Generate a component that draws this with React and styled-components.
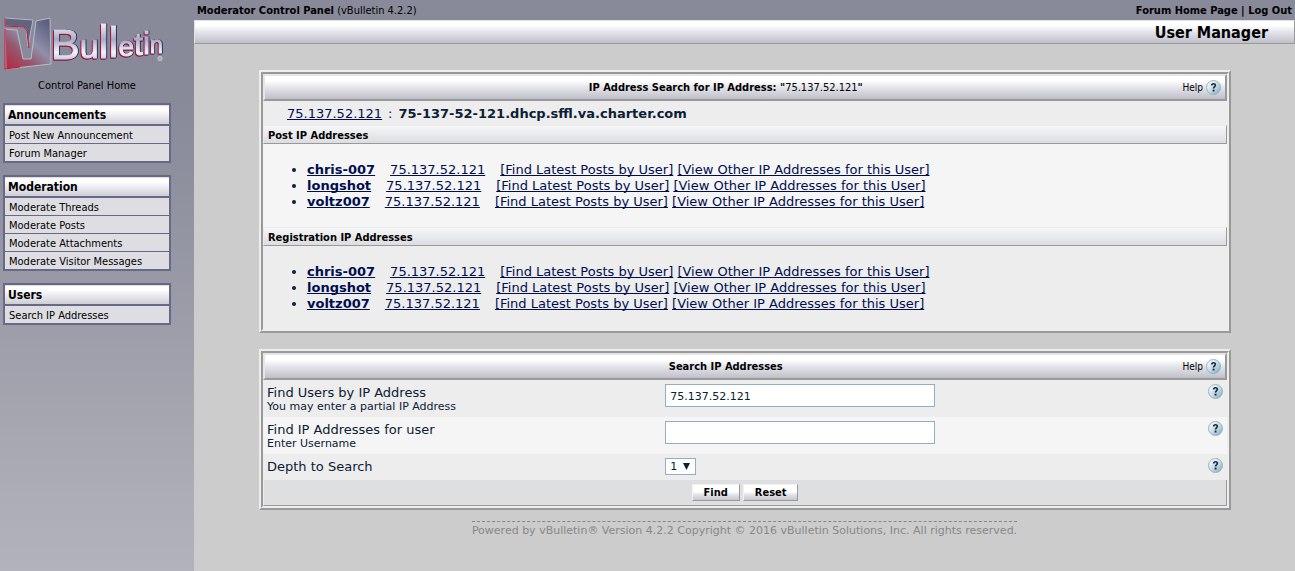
import React from 'react';
import styled, { createGlobalStyle, css } from 'styled-components';

const tahoma = `'Tahoma', 'DejaVu Sans Condensed', 'DejaVu Sans', sans-serif`;
const verdana = `'Verdana', 'DejaVu Sans', sans-serif`;
const metal = 'linear-gradient(#ffffff 20%, #e2e3e9 52%, #c8c8d1 88%, #bebecb)';

const GlobalStyle = createGlobalStyle`
  *, *::before, *::after { box-sizing: border-box; }
  body { margin: 0; background: #cccccc; }
  a { color: inherit; text-decoration-skip-ink: none; }
`;

const Page = styled.div`
  display: grid;
  grid-template-columns: 194px minmax(0, 1fr);
  min-height: 100vh;
  color: #0b2034;
  font: 13px/16px ${verdana};
`;

const Sidebar = styled.nav`
  display: flex;
  flex-direction: column;
  padding: 0 23px 16px 3px;
  background: linear-gradient(#888999 100px, #b5b6bc 600px);
  color: #000;
  font: 11px/14px ${tahoma};
`;

const Logo = styled.svg`
  display: block;
  width: 168px;
  height: 74px;
`;

const Wordmark = styled.text`
  font-family: 'Liberation Sans', sans-serif;
  fill: url(#chrome);
  stroke: url(#chrome);
  filter: drop-shadow(-1px 1px 0 #a5122f) drop-shadow(1px 0 0 #30335f);
`;

const HomeLink = styled.a`
  align-self: center;
  margin: 5px 0 10px;
  text-decoration: none;
`;

const NavGroup = styled.section`
  display: grid;
  gap: 1px;
  margin-bottom: 12px;
  padding: 2px;
  background: #686889;
`;

const NavTitle = styled.h2`
  margin: 0 0 1px;
  padding: 2px 3px 1px;
  border-top: 1px solid #dddde2;
  background: linear-gradient(#ffffff 20%, #e6e6eb 60%, #cdcdd6);
  font: bold 12px/15px ${tahoma};
`;

const NavLink = styled.a`
  padding: 3px 4px 0;
  background: #dddde2;
  text-decoration: none;
`;

const TopBar = styled.header`
  display: flex;
  justify-content: space-between;
  padding: 4px 3px 2px;
  background: #888999;
  color: #000;
  font: 11px/14px ${tahoma};
`;

const TopLinks = styled.div`
  font-weight: bold;
  a { text-decoration: none; }
`;

const TitleBar = styled.h1`
  margin: 0 0 26px;
  padding: 3px 26px 1px;
  border: 1px solid;
  border-color: #e2e2e2 #999 #999 #e2e2e2;
  background: ${metal};
  color: #000;
  font: bold 16px/18px ${tahoma};
  text-align: right;
`;

const Outer = styled.section`
  margin: 0 64px 16px 65px;
  border: 2px solid;
  border-color: #eeeeee #999 #999 #eeeeee;
`;

const Inner = styled.div`
  border: 2px solid;
  border-color: #999 #eeeeee #eeeeee #999;
  background: #ededed;
`;

const PanelHead = styled.div`
  display: flex;
  align-items: center;
  height: 27px;
  padding: 0 4px;
  border: 2px solid;
  border-color: #e6e6e6 #999 #999 #e6e6e6;
  background: ${metal};
  color: #000;
  font: 10px/14px ${tahoma};
`;

const PanelTitle = styled.h2`
  flex: 1;
  margin: 0;
  font: bold 11px/14px ${tahoma};
  text-align: center;
  span { font-weight: normal; }
`;

const HelpLink = styled.a`
  display: flex;
  align-items: center;
  gap: 3px;
  text-decoration: none;
`;

const HelpGlyph = styled.svg`
  display: block;
  flex: none;
  width: 15px;
  height: 15px;
`;

const HostLine = styled.div`
  display: flex;
  gap: 6px;
  padding: 5px 24px 3px;
  a { color: #000e50; }
`;

const Band = styled.h3`
  margin: 0;
  padding: 3px 4px 0;
  border: 1px solid;
  border-color: #ececee #999 #999 #ececee;
  background: linear-gradient(#f5f6f8, #dcdde0);
  color: #000;
  font: bold 11px/14px ${tahoma};
`;

const UserList = styled.ul`
  margin: 0;
  padding: 18px 4px 17px 44px;
  background: ${(p) => (p.$light ? '#f5f5f5' : '#ededed')};
  a { color: #000e50; }
`;

const Ip = styled.a`
  margin: 0 15px;
`;

const FormRow = styled.div`
  display: grid;
  grid-template-columns: 5fr 7fr;
  padding: 4px;
  background: ${(p) => (p.$light ? '#f5f5f5' : '#ededed')};
`;

const Label = styled.label`
  display: block;
  min-height: 18px;
  padding-top: 1px;
`;

const Hint = styled.small`
  display: block;
  font: 11px/12px ${verdana};
`;

const Control = styled.div`
  display: flex;
  align-items: flex-start;
  justify-content: space-between;
`;

const field = css`
  border: 1px solid #8fb0c4;
  border-radius: 0;
  background: #fff;
  color: #0b2034;
  font: 11px/14px ${verdana};
`;

const TextInput = styled.input`
  ${field}
  width: 270px;
  height: 23px;
  padding: 2px 4px 0;
`;

const SelectBox = styled.div`
  display: grid;
  align-items: center;
  select, svg { grid-area: 1 / 1; }
  svg { justify-self: end; width: 7px; height: 8px; margin: 0 6px 2px 0; pointer-events: none; }
`;

const Select = styled.select`
  ${field}
  width: 31px;
  height: 17px;
  padding: 0 4px;
  appearance: none;
`;

const Actions = styled.div`
  display: flex;
  justify-content: center;
  gap: 3px;
  height: 26px;
  padding: 4px;
  border: solid;
  border-width: 0 1px 1px;
  border-color: #999 #999 #999 #ededed;
  background: #dedfe1;
`;

const Button = styled.button`
  height: 17px;
  padding: 1px 11px 0;
  border: 1px solid;
  border-color: #f2f2f2 #999 #999 #f2f2f2;
  background: linear-gradient(#ffffff 45%, #e2e3e9 65%, #c6c7cf);
  color: #000;
  font: bold 11px/14px ${tahoma};
`;

const Copyright = styled.footer`
  width: fit-content;
  margin: -5px auto 0;
  border-top: 1px dashed #888;
  color: #888;
  font: 11px/17px ${verdana};
`;

const navGroups = [
  ['Announcements', ['Post New Announcement', 'Forum Manager']],
  ['Moderation', ['Moderate Threads', 'Moderate Posts', 'Moderate Attachments', 'Moderate Visitor Messages']],
  ['Users', ['Search IP Addresses']],
];
const users = ['chris-007', 'longshot', 'voltz007'];
const ip = '75.137.52.121';

// Each letter of the wordmark: character, change of baseline, size.
const letters = [
  ['B', 0, 43],
  ['u', -1, 34],
  ['l', 0, 46],
  ['l', -1, 43],
  ['e', -1, 28],
  ['t', -1, 32],
  ['i', -1, 32],
  ['n', -1, 23],
];

function Brand() {
  return (
    <Logo viewBox="3 0 168 74" role="img" aria-label="vBulletin">
      <defs>
        <linearGradient id="chrome" x1="0" y1="0" x2="0" y2="1">
          <stop offset=".1" stopColor="#fbfbff" />
          <stop offset=".45" stopColor="#a9abc8" />
          <stop offset=".7" stopColor="#f4f4ff" />
          <stop offset="1" stopColor="#9698bd" />
        </linearGradient>
        <linearGradient id="emblem" x1="0" y1="1" x2=".8" y2="0">
          <stop offset="0" stopColor="#b8243f" />
          <stop offset=".35" stopColor="#96566c" />
          <stop offset=".6" stopColor="#8f90a8" />
          <stop offset="1" stopColor="#5c5f80" />
        </linearGradient>
      </defs>
      <path d="M5 18 33 20 28 46 26 29 23 27 5 26Z" fill="#62647e" stroke="#c4c4d4" strokeWidth=".8" />
      <path d="M5 18V26L24 27 27 31 29 48" fill="none" stroke="#c9132f" />
      <path d="M5 29 17 30 23 59H31L36 21 50 18 51 64 6 69Z" fill="url(#emblem)" stroke="#c9c9d8" strokeWidth=".8" />
      <path d="M5 29V69L20 67" fill="none" stroke="#d0102d" />
      <Wordmark x="51" y="59">
        {letters.map(([c, dy, size], i) => (
          <tspan key={i} dy={dy} fontSize={size}>{c}</tspan>
        ))}
      </Wordmark>
      <circle cx="160" cy="58.500" r="2.200" fill="#a8a9b8" stroke="#d5d5df" strokeWidth=".7" />
    </Logo>
  );
}

function HelpIcon() {
  return (
    <HelpGlyph viewBox="0 0 15 15" aria-hidden="true">
      <defs>
        <linearGradient id="glass" x1="0" y1="0" x2="1" y2="1">
          <stop offset=".2" stopColor="#f0f5f8" />
          <stop offset=".6" stopColor="#bdd4de" />
          <stop offset="1" stopColor="#75a6b9" />
        </linearGradient>
      </defs>
      <circle cx="7.500" cy="7.500" r="7" fill="url(#glass)" stroke="#86b0c0" strokeWidth=".9" />
      <path d="M5.700 5.400C5.700 3.200 9.300 3.200 9.300 5.300 9.300 6.800 7.500 6.800 7.500 8.600" fill="none" stroke="#1b2c44" strokeWidth="1.700" />
      <rect x="6.600" y="9.600" width="1.900" height="1.900" fill="#1b2c44" />
    </HelpGlyph>
  );
}

function Panel({ title, children }) {
  return (
    <Outer>
      <Inner>
        <PanelHead>
          <PanelTitle>{title}</PanelTitle>
          <HelpLink href="#help">Help <HelpIcon /></HelpLink>
        </PanelHead>
        {children}
      </Inner>
    </Outer>
  );
}

function Users({ light }) {
  return (
    <UserList $light={light}>
      {users.map((name) => (
        <li key={name}>
          <a href="#user"><b>{name}</b></a>
          <Ip href="#ip">{ip}</Ip>
          <a href="#posts">[Find Latest Posts by User]</a>{' '}
          <a href="#addresses">[View Other IP Addresses for this User]</a>
        </li>
      ))}
    </UserList>
  );
}

function Row({ id, label, hint, light, children }) {
  return (
    <FormRow $light={light}>
      <Label htmlFor={id}>
        {label}
        {hint && <Hint>{hint}</Hint>}
      </Label>
      <Control>
        {children}
        <HelpLink href="#help" aria-label={`Help: ${label}`}><HelpIcon /></HelpLink>
      </Control>
    </FormRow>
  );
}

export default function App() {
  return (
    <Page>
      <GlobalStyle />
      <Sidebar>
        <Brand />
        <HomeLink href="#home">Control Panel Home</HomeLink>
        {navGroups.map(([title, links]) => (
          <NavGroup key={title}>
            <NavTitle>{title}</NavTitle>
            {links.map((text) => <NavLink key={text} href="#nav">{text}</NavLink>)}
          </NavGroup>
        ))}
      </Sidebar>
      <main>
        <TopBar>
          <div><b>Moderator Control Panel</b> (vBulletin 4.2.2)</div>
          <TopLinks><a href="#forum">Forum Home Page</a> | <a href="#logout">Log Out</a></TopLinks>
        </TopBar>
        <TitleBar>User Manager</TitleBar>
        <Panel title={<>IP Address Search for IP Address: "<span>{ip}</span>"</>}>
          <HostLine><a href="#ip">{ip}</a><span>:</span><b>75-137-52-121.dhcp.sffl.va.charter.com</b></HostLine>
          <Band>Post IP Addresses</Band>
          <Users light />
          <Band>Registration IP Addresses</Band>
          <Users />
        </Panel>
        <form onSubmit={(e) => e.preventDefault()}>
          <Panel title="Search IP Addresses">
            <Row id="address" label="Find Users by IP Address" hint="You may enter a partial IP Address">
              <TextInput id="address" defaultValue={ip} />
            </Row>
            <Row id="username" label="Find IP Addresses for user" hint="Enter Username" light>
              <TextInput id="username" />
            </Row>
            <Row id="depth" label="Depth to Search">
              <SelectBox>
                <Select id="depth"><option>1</option><option>2</option></Select>
                <svg viewBox="0 0 7 8" aria-hidden="true"><path d="M0 1H7L3.500 8Z" fill="#0b2034" /></svg>
              </SelectBox>
            </Row>
            <Actions>
              <Button type="submit">Find</Button>
              <Button type="reset">Reset</Button>
            </Actions>
          </Panel>
        </form>
        <Copyright>Powered by vBulletin® Version 4.2.2 Copyright © 2016 vBulletin Solutions, Inc. All rights reserved.</Copyright>
      </main>
    </Page>
  );
}
